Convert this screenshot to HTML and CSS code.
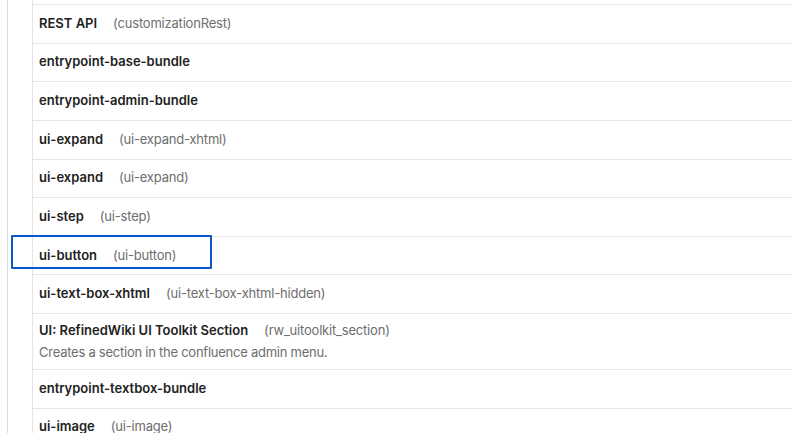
FILE: index.html
```html
<!DOCTYPE html>
<html>
<head>
<meta charset="utf-8">
<link rel="stylesheet" href="styles.css">
</head>
<body>
<div class="page">
  <div class="list">
    <div class="row"><span class="name">REST API</span><span class="key">(customizationRest)</span></div>
    <div class="row"><span class="name">entrypoint-base-bundle</span></div>
    <div class="row"><span class="name">entrypoint-admin-bundle</span></div>
    <div class="row"><span class="name">ui-expand</span><span class="key">(ui-expand-xhtml)</span></div>
    <div class="row"><span class="name">ui-expand</span><span class="key">(ui-expand)</span></div>
    <div class="row"><span class="name">ui-step</span><span class="key">(ui-step)</span></div>
    <div class="row focused"><span class="name">ui-button</span><span class="key">(ui-button)</span><span class="focus-ring"></span></div>
    <div class="row"><span class="name">ui-text-box-xhtml</span><span class="key">(ui-text-box-xhtml-hidden)</span></div>
    <div class="row tall">
      <div class="line"><span class="name">UI: RefinedWiki UI Toolkit Section</span><span class="key">(rw_uitoolkit_section)</span></div>
      <div class="desc">Creates a section in the confluence admin menu.</div>
    </div>
    <div class="row"><span class="name">entrypoint-textbox-bundle</span></div>
    <div class="row"><span class="name">ui-image</span><span class="key">(ui-image)</span></div>
  </div>
</div>
</body>
</html>
```

FILE: styles.css
```css
html, body {
  margin: 0;
  padding: 0;
  background: #ffffff;
  height: 100%;
  overflow: hidden;
}

body {
  font-family: Inter, "Liberation Sans", Arial, sans-serif;
  font-size: 13px;
  color: #222222;
}

.page {
  margin-left: 7px;
  border-left: 1px solid #dcdcdc;
  height: 100%;
  padding-left: 24px;
}

.list {
  border-left: 1px solid #e4e4e4;
  padding-top: 4px;
  height: 100%;
}

.row {
  position: relative;
  display: flex;
  align-items: center;
  box-sizing: border-box;
  height: 38.625px;
  border-top: 1px solid #e6e6e6;
  padding-left: 6px;
  padding-bottom: 2px;
  line-height: 16px;
}

.row.tall {
  height: 56px;
  flex-direction: column;
  align-items: flex-start;
  justify-content: center;
  gap: 6px;
}

.line {
  display: flex;
  align-items: center;
}

.name {
  font-weight: 600;
  color: #222222;
}

.key {
  margin-left: 16px;
  color: #6e6e6e;
  letter-spacing: -0.2px;
}

.desc {
  color: #6e6e6e;
  letter-spacing: -0.25px;
}

.focus-ring {
  position: absolute;
  left: -22px;
  top: -2px;
  width: 201px;
  height: 34px;
  box-sizing: border-box;
  border: 2px solid #0b57d0;
  border-radius: 1px;
  pointer-events: none;
}
```
